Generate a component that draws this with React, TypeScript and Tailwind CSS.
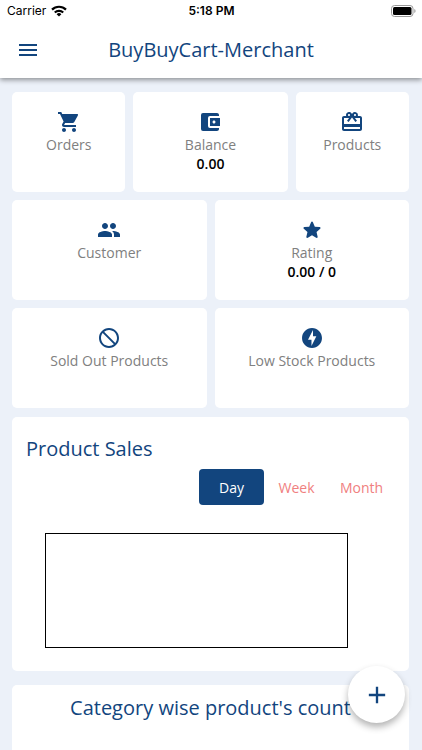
import React from "react";
import clsx from "clsx";
import {
  MdAccountBalanceWallet,
  MdAdd,
  MdCardGiftcard,
  MdGroup,
  MdMenu,
  MdNotInterested,
  MdOfflineBolt,
  MdShoppingCart,
} from "react-icons/md";

type StatType = {
  label: string;
  icon: React.ComponentType<{ className?: string }>;
  value?: string;
};

// material star with rounded tips
function RoundStar({ className }: { className?: string }) {
  return (
    <svg viewBox="0 0 24 24" fill="currentColor" className={className}>
      <path d="M12 17.27l4.15 2.51c.76.46 1.69-.22 1.49-1.08l-1.1-4.72 3.67-3.18c.67-.58.31-1.68-.57-1.75l-4.83-.41-1.89-4.46c-.34-.81-1.5-.81-1.84 0L9.19 8.63l-4.83.41c-.88.07-1.24 1.17-.57 1.75l3.67 3.18-1.1 4.72c-.2.86.73 1.54 1.49 1.08l4.15-2.5z" />
    </svg>
  );
}

const topStats: StatType[] = [
  { label: "Orders", icon: MdShoppingCart },
  { label: "Balance", icon: MdAccountBalanceWallet, value: "0.00" },
  { label: "Products", icon: MdCardGiftcard },
];

const stats: StatType[] = [
  { label: "Customer", icon: MdGroup },
  { label: "Rating", icon: RoundStar, value: "0.00 / 0" },
  { label: "Sold Out Products", icon: MdNotInterested },
  { label: "Low Stock Products", icon: MdOfflineBolt },
];

const periods = ["Day", "Week", "Month"];

function StatCard({ label, icon: Icon, value }: StatType) {
  return (
    <div className="flex h-[100px] flex-col items-center rounded-[5px] bg-white pt-[18px]">
      <Icon className="size-6 text-[#12457e]" />
      <p className="text-[14px] leading-[22px] text-[#808080]">{label}</p>
      {value && (
        <p className="text-[14px] leading-[16px] font-semibold text-black">
          {value}
        </p>
      )}
    </div>
  );
}

function StatusBar() {
  return (
    <div className="grid h-[22px] grid-cols-3 items-center pr-[6px] pl-[7px] font-['Inter',sans-serif] text-[12px] text-black">
      <div className="flex items-center gap-[5px]">
        <span>Carrier</span>
        <svg viewBox="0 0 16 12" className="h-[12px] w-[16px]" aria-label="Wi-Fi">
          <g fill="none" stroke="currentColor" strokeWidth="2.2">
            <path d="M1 4.6a10 10 0 0 1 14 0" />
            <path d="M3.8 7.5a6 6 0 0 1 8.4 0" />
          </g>
          <path d="M8 11.6 5.6 9.2a3.4 3.4 0 0 1 4.8 0z" fill="currentColor" />
        </svg>
      </div>
      <span className="text-center font-semibold">5:18 PM</span>
      <svg
        viewBox="0 0 25 12"
        className="h-[12px] w-[25px] justify-self-end"
        aria-label="Battery"
      >
        <rect x="0.5" y="0.5" width="21.5" height="11" rx="3" fill="none" stroke="#999" />
        <rect x="2" y="2" width="18.5" height="8" rx="1.5" fill="#000" />
        <path d="M23.3 4v4a2.2 2.2 0 0 0 0-4z" fill="#999" />
      </svg>
    </div>
  );
}

export default function App() {
  const [period, setPeriod] = React.useState("Day");

  return (
    <div className="flex min-h-screen flex-col bg-[#ecf1f9] font-['Open_Sans',sans-serif]">
      <header className="bg-white shadow-[0_2px_5px_rgba(0,0,0,0.4)]">
        <StatusBar />
        <div className="grid h-[56px] grid-cols-[56px_1fr_56px] items-center">
          <button type="button" aria-label="Menu" className="justify-self-center">
            <MdMenu className="size-6 text-[#12457e]" />
          </button>
          <h1 className="text-center text-[20px] text-[#12457e]">
            BuyBuyCart-Merchant
          </h1>
        </div>
      </header>

      <main className="flex flex-1 flex-col pt-[14px] pr-[13px] pl-[12px]">
        <div className="grid grid-cols-[28fr_38fr_28fr] gap-2">
          {topStats.map((s) => (
            <StatCard key={s.label} {...s} />
          ))}
        </div>
        <div className="mt-2 grid grid-cols-2 gap-2">
          {stats.map((s) => (
            <StatCard key={s.label} {...s} />
          ))}
        </div>

        <section className="mt-[9px] rounded-[5px] bg-white pt-[18px] pb-[23px]">
          <h2 className="pl-[14px] text-[20px] leading-[28px] text-[#12457e]">
            Product Sales
          </h2>
          <div className="mt-[6px] flex justify-end pr-[15px]">
            {periods.map((p) => (
              <button
                key={p}
                type="button"
                onClick={() => setPeriod(p)}
                className={clsx(
                  "h-[36px] w-[65px] rounded-[4px] text-[14px]",
                  p === period ? "bg-[#12457e] text-white" : "text-[#f08080]"
                )}
              >
                {p}
              </button>
            ))}
          </div>
          <div className="mt-[28px] mr-[61px] ml-[33px] h-[115px] border border-black" />
        </section>

        <section className="mt-[14px] flex-1 rounded-t-[5px] bg-white pt-[9px]">
          <h2 className="text-center text-[20px] leading-[28px] text-[#12457e]">
            Category wise product's count
          </h2>
        </section>
      </main>

      <button
        type="button"
        aria-label="Add"
        className="fixed right-[17px] bottom-[27px] flex size-[57px] items-center justify-center rounded-full bg-white shadow-[0_4px_7px_rgba(0,0,0,0.3)]"
      >
        <MdAdd className="size-[28px] text-[#12457e]" />
      </button>
    </div>
  );
}
